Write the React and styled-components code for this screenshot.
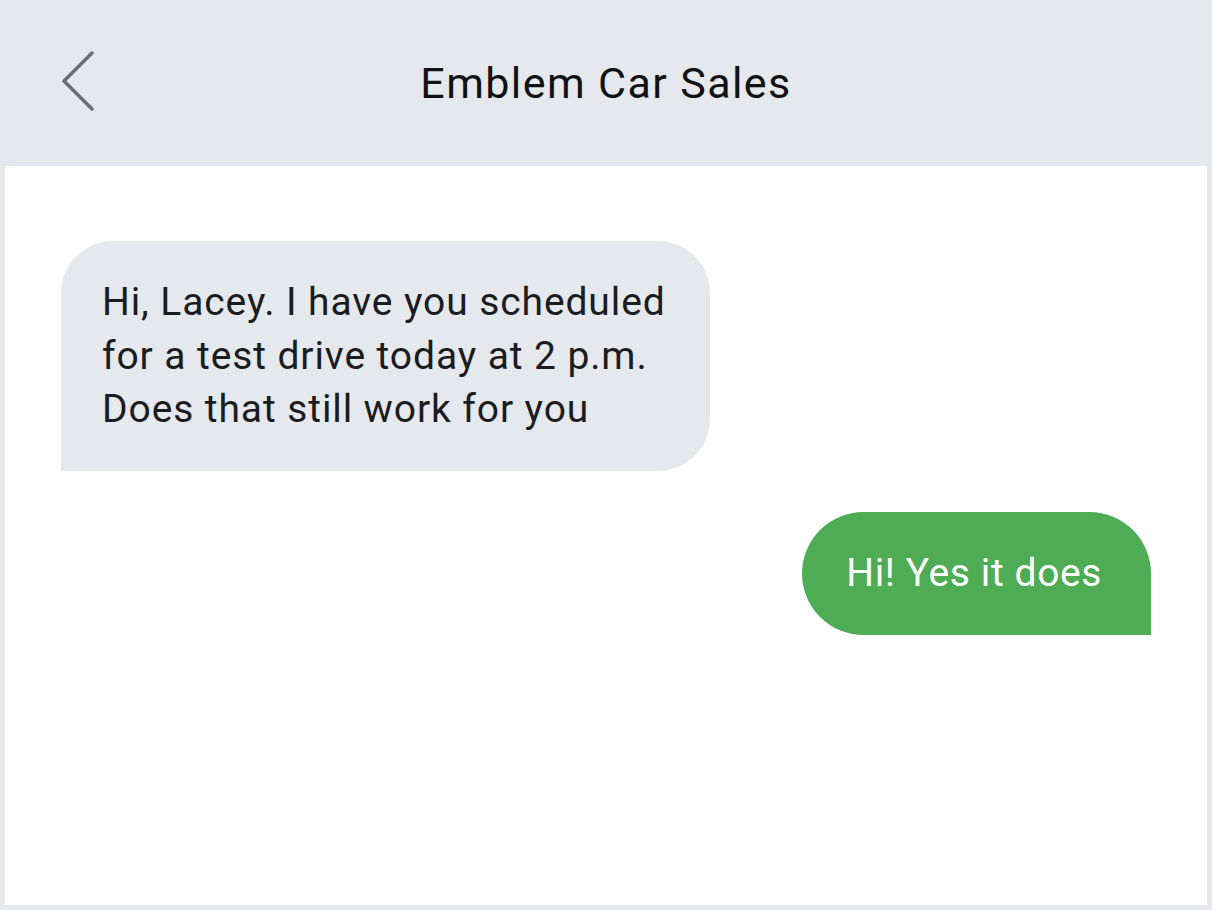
import React from "react";
import styled, { createGlobalStyle } from "styled-components";

const GlobalStyle = createGlobalStyle`
  html, body {
    margin: 0;
    padding: 0;
    background: #e5e8ed;
  }
  body {
    font-family: Roboto, "Liberation Sans", Arial, sans-serif;
  }
`;

const Screen = styled.div`
  width: 1212px;
  height: 910px;
  display: flex;
  flex-direction: column;
  background: #e5e8ed;
  padding: 0 5px 5px;
  box-sizing: border-box;
`;

const Header = styled.header`
  height: 166px;
  flex-shrink: 0;
  display: grid;
  grid-template-columns: 120px 1fr 120px;
  align-items: center;
  margin: 0 -5px;
`;

const BackButton = styled.button`
  border: none;
  background: transparent;
  padding: 0;
  margin-left: 60px;
  margin-top: -4px;
  width: 40px;
  height: 64px;
  display: flex;
  align-items: center;
  cursor: pointer;
`;

const Title = styled.h1`
  margin: 0;
  text-align: center;
  font-size: 43px;
  font-weight: 400;
  color: #111214;
  letter-spacing: 1.4px;
`;

const Thread = styled.main`
  flex: 1;
  background: #ffffff;
  display: flex;
  flex-direction: column;
  gap: 41px;
  padding: 75px 56px;
`;

const Bubble = styled.div`
  align-self: ${(p) => (p.$mine ? "flex-end" : "flex-start")};
  background: ${(p) => (p.$mine ? "#4dac54" : "#e5e8ed")};
  color: ${(p) => (p.$mine ? "#ffffff" : "#1b1c1e")};
  font-size: 39px;
  line-height: 53.5px;
  letter-spacing: ${(p) => (p.$mine ? "0.6px" : "0.9px")};
  border-radius: ${(p) => (p.$mine ? "62px 62px 0 62px" : "52px 52px 52px 0")};
  padding: ${(p) => (p.$mine ? "35px 49px 35px 44px" : "35px 42px 34px 41px")};
  max-width: 566px;
`;

function BackIcon() {
  return (
    <svg width="36" height="64" viewBox="0 0 36 64" fill="none">
      <path
        d="M32 4 L4 32 L32 60"
        stroke="#6b6e73"
        strokeWidth="3.5"
        strokeLinecap="round"
        strokeLinejoin="round"
      />
    </svg>
  );
}

const messages = [
  {
    id: 1,
    mine: false,
    text: "Hi, Lacey. I have you scheduled for a test drive today at 2 p.m. Does that still work for you",
  },
  { id: 2, mine: true, text: "Hi! Yes it does" },
];

export default function App() {
  return (
    <>
      <GlobalStyle />
      <Screen>
        <Header>
          <BackButton aria-label="Back">
            <BackIcon />
          </BackButton>
          <Title>Emblem Car Sales</Title>
          <div />
        </Header>
        <Thread>
          {messages.map((m) => (
            <Bubble key={m.id} $mine={m.mine}>
              {m.text}
            </Bubble>
          ))}
        </Thread>
      </Screen>
    </>
  );
}
